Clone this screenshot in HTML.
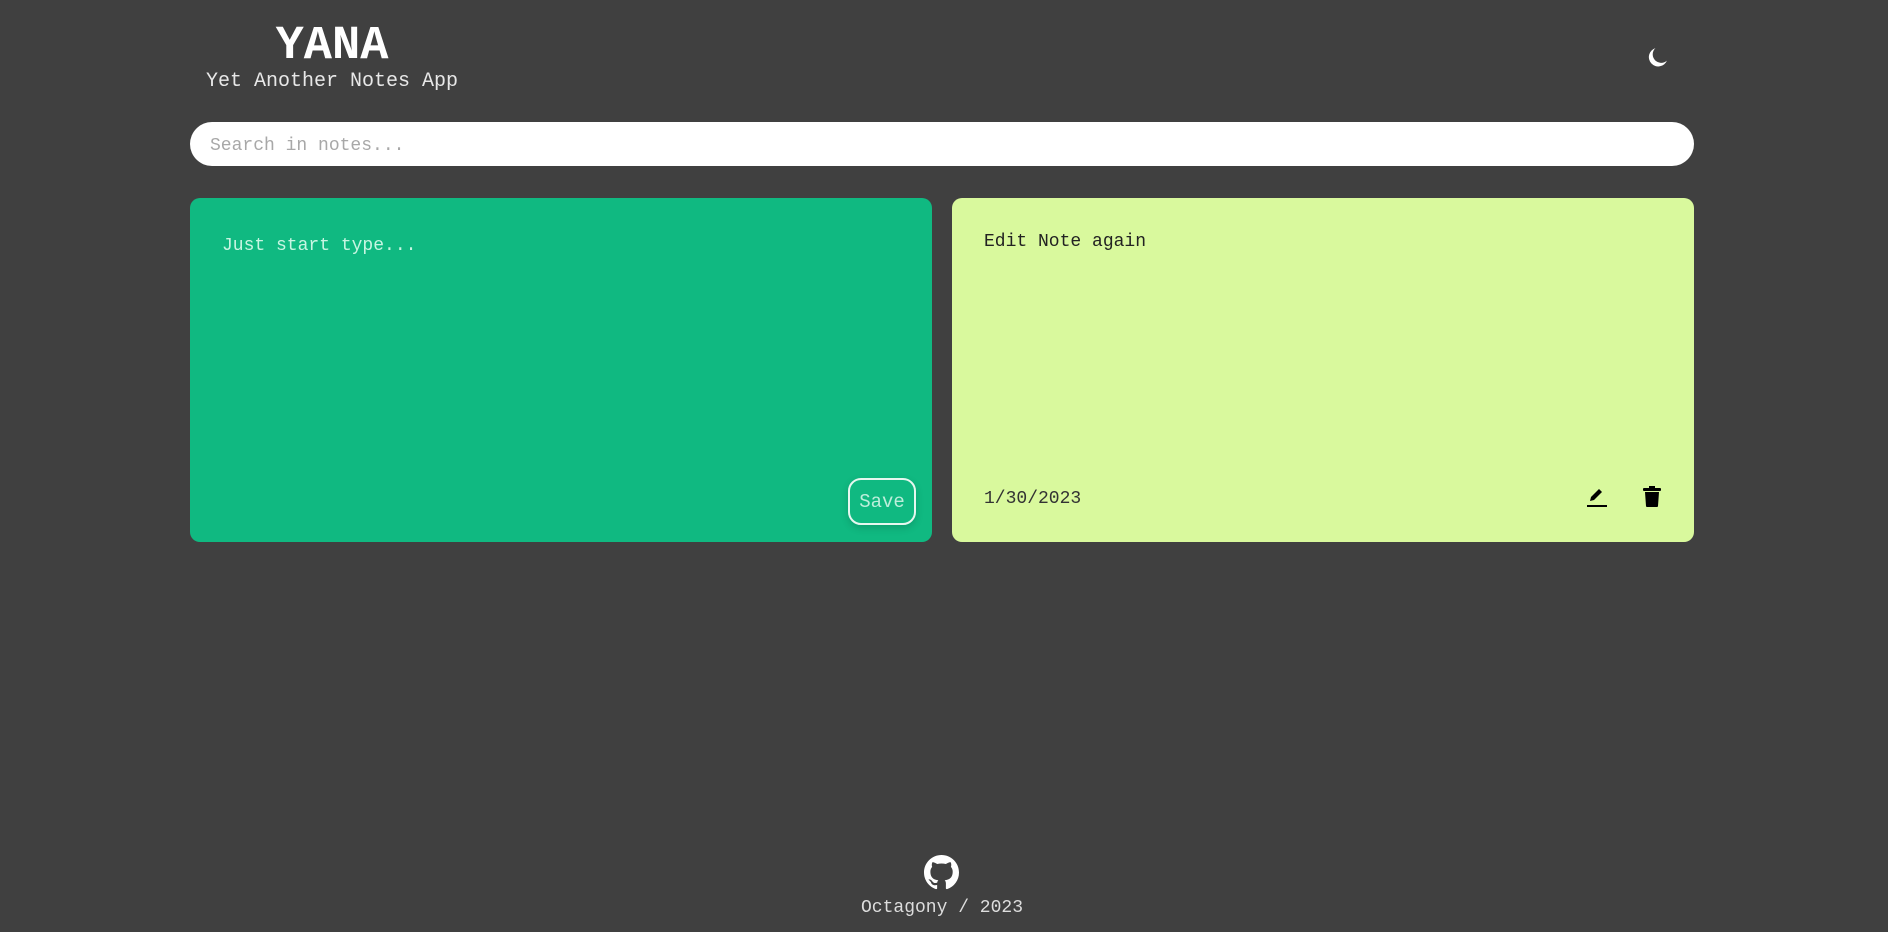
<!DOCTYPE html>
<html><head><meta charset="utf-8"><style>
*{box-sizing:border-box;margin:0;padding:0}
body{width:1888px;height:932px;background:#404040;font-family:"Liberation Mono","Courier New",monospace;position:relative;overflow:hidden}
.abs{position:absolute}
h1{position:absolute;left:182px;top:21px;width:300px;text-align:center;color:#fff;font-size:47px;font-weight:bold;line-height:52px}
.sub{left:206px;top:69px;color:#e8e8e8;font-size:20px;line-height:26px;white-space:nowrap}
.search{left:190px;top:122px;width:1504px;height:44px;background:#fff;border-radius:22px;padding-left:20px;padding-top:2px;line-height:44px;color:#a8a8a8;font-size:18px}
.card{top:198px;height:344px;border-radius:10px}
.g{left:190px;width:742px;background:#10b981}
.y{left:952px;width:742px;background:#d9f99d}
.t{font-size:18px;line-height:22px;white-space:nowrap}
</style></head><body>
<h1>YANA</h1>
<div class="abs sub">Yet Another Notes App</div>
<svg class="abs" style="left:1644px;top:45px" width="25" height="25" viewBox="0 0 24 24"><path d="M11 3 A9 9 0 1 0 22 15 A7.5 7.5 0 0 1 11 3Z" fill="#fff"/></svg>
<div class="abs search">Search in notes...</div>
<div class="abs card g"></div>
<div class="abs card y"></div>
<div class="abs t" style="left:222px;top:235px;color:#c8f5e2">Just start type...</div>
<div class="abs" style="left:848px;top:478px;width:68px;height:47px;border:2px solid #e6f7ef;border-radius:13px;color:#bdeedb;font-size:19px;line-height:45px;text-align:center;box-shadow:0 3px 8px rgba(0,0,0,.15)">Save</div>
<div class="abs t" style="left:984px;top:231px;color:#222">Edit Note again</div>
<div class="abs t" style="left:984px;top:488px;color:#333">1/30/2023</div>
<svg class="abs" style="left:1586px;top:486px" width="22" height="22" viewBox="0 0 22 22"><path d="M4 15 L5 11 L13 3 L16 6 L8 14 Z" fill="#000"/><rect x="1" y="19" width="20" height="2" fill="#000"/></svg>
<svg class="abs" style="left:1642px;top:486px" width="20" height="22" viewBox="0 0 20 22"><rect x="1" y="2" width="18" height="3" rx="1" fill="#000"/><rect x="7" y="0" width="6" height="3" fill="#000"/><path d="M3 6 H17 L16 20 Q16 21 15 21 H5 Q4 21 4 20 Z" fill="#000"/></svg>
<svg class="abs" style="left:924px;top:855px" width="35" height="35" viewBox="0 0 16 16"><path fill="#fff" d="M8 0C3.58 0 0 3.58 0 8c0 3.54 2.29 6.530 5.47 7.59.4.07.55-.17.55-.38 0-.19-.01-.82-.01-1.49-2.01.37-2.53-.49-2.69-.94-.09-.23-.48-.94-.82-1.13-.28-.15-.68-.52-.01-.53.63-.01 1.08.58 1.23.82.72 1.21 1.87.87 2.330.66.07-.52.28-.87.51-1.07-1.78-.2-3.64-.89-3.64-3.95 0-.87.31-1.59.82-2.15-.08-.2-.36-1.02.08-2.12 0 0 .67-.21 2.2.82.64-.18 1.32-.27 2-.27.68 0 1.36.09 2 .27 1.53-1.04 2.2-.82 2.2-.82.44 1.1.16 1.92.08 2.12.51.56.82 1.27.82 2.15 0 3.07-1.87 3.75-3.65 3.95.29.25.54.73.54 1.48 0 1.07-.01 1.93-.01 2.2 0 .21.15.46.55.38A8.013 8.013 0 0016 8c0-4.42-3.58-8-8-8z"/></svg>
<div class="abs t" style="left:0;width:1884px;text-align:center;top:897px;color:#ddd">Octagony / 2023</div>
</body></html>
